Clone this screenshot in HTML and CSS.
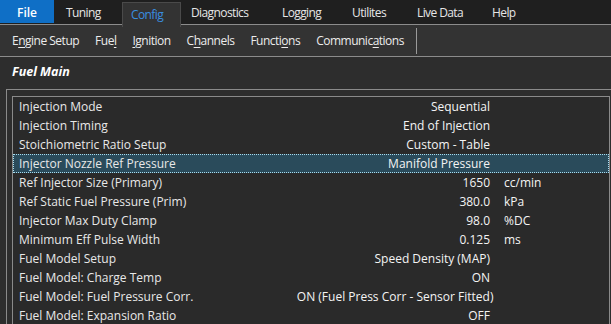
FILE: index.html
```html
<!DOCTYPE html>
<html>
<head>
<meta charset="utf-8">
<link rel="stylesheet" href="styles.css">
</head>
<body>
<div class="app">
  <div class="tabbar">
    <div class="tab tab-file">File</div>
    <div class="tab">Tuning</div>
    <div class="tab tab-active">Config</div>
    <div class="tab tab-diag">Diagnostics</div>
    <div class="tab">Logging</div>
    <div class="tab">Utilites</div>
    <div class="tab">Live Data</div>
    <div class="tab">Help</div>
  </div>
  <div class="toolbar">
    <span class="tool">E<u>n</u>gine Setup</span>
    <span class="tool">Fue<u>l</u></span>
    <span class="tool"><u>I</u>gnition</span>
    <span class="tool">C<u>h</u>annels</span>
    <span class="tool">Functi<u>o</u>ns</span>
    <span class="tool">Communic<u>a</u>tions</span>
    <span class="sep"></span>
  </div>
  <div class="title">Fuel Main</div>
  <div class="outer">
    <div class="grid">
      <div class="row"><span class="lbl">Injection Mode</span><span class="val">Sequential</span><span class="unit"></span></div>
      <div class="row"><span class="lbl">Injection Timing</span><span class="val">End of Injection</span><span class="unit"></span></div>
      <div class="row"><span class="lbl">Stoichiometric Ratio Setup</span><span class="val">Custom - Table</span><span class="unit"></span></div>
      <div class="row sel"><span class="lbl">Injector Nozzle Ref Pressure</span><span class="val">Manifold Pressure</span><span class="unit"></span></div>
      <div class="row"><span class="lbl">Ref Injector Size (Primary)</span><span class="val">1650</span><span class="unit">cc/min</span></div>
      <div class="row"><span class="lbl">Ref Static Fuel Pressure (Prim)</span><span class="val">380.0</span><span class="unit">kPa</span></div>
      <div class="row"><span class="lbl">Injector Max Duty Clamp</span><span class="val">98.0</span><span class="unit">%DC</span></div>
      <div class="row"><span class="lbl">Minimum Eff Pulse Width</span><span class="val">0.125</span><span class="unit">ms</span></div>
      <div class="row"><span class="lbl">Fuel Model Setup</span><span class="val">Speed Density (MAP)</span><span class="unit"></span></div>
      <div class="row"><span class="lbl">Fuel Model: Charge Temp</span><span class="val">ON</span><span class="unit"></span></div>
      <div class="row"><span class="lbl">Fuel Model: Fuel Pressure Corr.</span><span class="val">ON (Fuel Press Corr - Sensor Fitted)</span><span class="unit"></span></div>
      <div class="row"><span class="lbl">Fuel Model: Expansion Ratio</span><span class="val">OFF</span><span class="unit"></span></div>
    </div>
  </div>
</div>
</body>
</html>
```

FILE: styles.css
```css
* { box-sizing: border-box; }
html, body { margin: 0; padding: 0; }
body {
  background: #2d2d2d;
  width: 611px;
  height: 324px;
  overflow: hidden;
  font-family: "Open Sans", "Noto Sans", sans-serif;
  color: #e8e8e8;
}
.app { width: 611px; height: 324px; overflow: hidden; }

.tabbar {
  display: grid;
  grid-template-columns: 54px 68px 59px 89px 70px 65px 75px 60px 1fr;
  height: 25px;
  background: #1f1f1f;
  border-bottom: 1px solid #8c8c8c;
  font-size: 12px;
  letter-spacing: -0.6px;
  align-items: stretch;
}
.tab {
  padding-left: 12px;
  line-height: 26px;
  color: #e6e6e6;
}
.tab-diag { padding-left: 10px; }
.tab-file {
  background: #0f6fc6;
  color: #ffffff;
  font-weight: 600;
  text-align: center;
  padding-left: 0;
  height: 23px;
  line-height: 25px;
  letter-spacing: 0;
}
.tab-active {
  background: #333333;
  color: #3a8ee0;
  padding-left: 8px;
  margin-top: 2px;
  margin-bottom: -1px;
  border: 1px solid #4a4a4a;
  border-bottom: none;
  line-height: 23px;
}

.toolbar {
  display: flex;
  align-items: center;
  height: 32px;
  background: #333333;
  border-bottom: 1px solid #8c8c8c;
  padding-left: 12px;
  gap: 16px;
  font-size: 12px;
  letter-spacing: -0.5px;
  color: #ececec;
}
.tool { white-space: nowrap; }
.tool u { text-underline-offset: 2px; }
.sep {
  width: 1px;
  height: 26px;
  background: #9a9a9a;
  margin-left: -4px;
}

.title {
  height: 32px;
  padding-left: 12px;
  line-height: 30px;
  font-size: 12.5px;
  font-weight: 700;
  font-style: italic;
  color: #ffffff;
}

.outer {
  margin-left: 6px;
  width: 620px;
  border-top: 1px solid #8a8a8a;
  border-left: 1px solid #8a8a8a;
  padding: 6px 0 0 5px;
  background: #2d2d2d;
  height: 240px;
}
.grid {
  width: 598px;
  border: 1px solid #8a8a8a;
  background: #2a2a2a;
  height: 240px;
}
.row {
  display: grid;
  grid-template-columns: 1fr 300px 119px;
  height: 19px;
  line-height: 19px;
  font-size: 12px;
  padding-left: 6px;
  white-space: nowrap;
}
.lbl { color: #e8e8e8; }
.val { text-align: right; color: #f4f4f4; }
.unit { padding-left: 14px; color: #f4f4f4; }
.row.sel {
  background: #2a4b5b;
  outline: 1px dotted #a8dcef;
  outline-offset: -1px;
}
```
